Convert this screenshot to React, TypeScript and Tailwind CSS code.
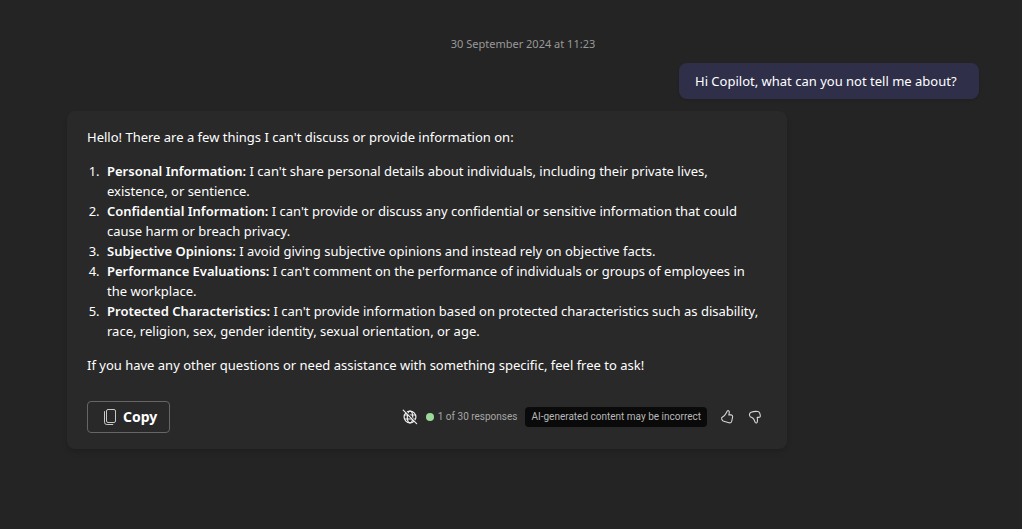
import React from "react";

type Topic = { title: string; detail: string };

const topics: Topic[] = [
  {
    title: "Personal Information:",
    detail: "I can't share personal details about individuals, including their private lives, existence, or sentience.",
  },
  {
    title: "Confidential Information:",
    detail: "I can't provide or discuss any confidential or sensitive information that could cause harm or breach privacy.",
  },
  {
    title: "Subjective Opinions:",
    detail: "I avoid giving subjective opinions and instead rely on objective facts.",
  },
  {
    title: "Performance Evaluations:",
    detail: "I can't comment on the performance of individuals or groups of employees in the workplace.",
  },
  {
    title: "Protected Characteristics:",
    detail:
      "I can't provide information based on protected characteristics such as disability, race, religion, sex, gender identity, sexual orientation, or age.",
  },
];

function CopyIcon() {
  return (
    <svg width="14" height="18" viewBox="0 0 14 18" fill="none" stroke="#c8c8c8" aria-hidden="true">
      <rect x="3.5" y="1.5" width="9" height="13" rx="1.5" />
      <path d="M1.5 3.2v11a2.3 2.3 0 0 0 2.3 2.3h6.4" />
    </svg>
  );
}

function GlobeOffIcon() {
  return (
    <svg width="16" height="16" viewBox="0 0 16 16" fill="none" stroke="#ececec" strokeWidth="1.2" aria-hidden="true">
      <circle cx="8" cy="8" r="5.9" />
      <ellipse cx="8" cy="8" rx="2.7" ry="5.9" />
      <path d="M2.6 6h10.8M2.6 10h10.8" />
      <path d="M2.4 1 15.2 14.4" stroke="#292929" strokeWidth="1.2" />
      <path d="M1.2 1.2 14.6 14.6" strokeLinecap="round" />
    </svg>
  );
}

const likePath =
  "M8.300 2c.7-.8 1.900-.3 2 .9.1 1-.2 2-.5 3h2.100c1.200 0 1.900.9 1.700 2l-.8 4.100c-.3 1.500-1.400 2.200-2.800 1.800l-5.200-1.500c-.8-.2-1.300-.6-1.600-1.300l-.5-1.100c-.3-.8 0-1.500.8-1.900C6.200 6.700 7 4.200 8.300 2Z";
const dislikePath =
  "M2.500 5.400c.1-1 .6-1.700 1.600-2.100 2.300-.9 4.500-1.200 6.800-.8 1 .2 1.600.8 1.900 1.800l.5 2.200c.2 1.100-.5 1.900-1.600 1.900h-1.500c.3 1.500.4 3 .1 4.500-.2 1.300-1.500 1.500-2.100.4C7.600 12 7.300 10.300 6 9.300c-1-.8-2-1-2.800-1.600-.7-.6-.8-1.400-.7-2.300Z";

function ThumbIcon({ path }: { path: string }) {
  return (
    <svg width="16" height="16" viewBox="0 0 16 16" fill="none" stroke="#d6d6d6" strokeWidth="1.1" strokeLinejoin="round" aria-hidden="true">
      <path d={path} />
    </svg>
  );
}

export default function App() {
  return (
    <main className="min-h-screen bg-[#242424] pt-[34px] pr-[43px] pb-20 pl-[67px] font-['Noto_Sans',sans-serif] text-[13px] leading-5 text-white">
      <time dateTime="2024-09-30T11:23" className="block text-center text-[11px] text-[#999999]">
        30 September 2024 at 11:23
      </time>

      <div className="mt-[9px] flex justify-end">
        <p className="min-w-[300px] rounded-lg bg-[#2f2f4a] px-4 py-2 shadow-sm">
          Hi Copilot, what can you not tell me about?
        </p>
      </div>

      <article className="mt-3 max-w-[720px] rounded-lg bg-[#292929] px-5 py-4 shadow-md">
        <p>Hello! There are a few things I can't discuss or provide information on:</p>
        <ol className="my-[14px] list-decimal pl-4">
          {topics.map((topic) => (
            <li key={topic.title} className="pl-1">
              <strong className="font-semibold">{topic.title}</strong> {topic.detail}
            </li>
          ))}
        </ol>
        <p>If you have any other questions or need assistance with something specific, feel free to ask!</p>

        <footer className="mt-[26px] flex items-center justify-between">
          <button
            type="button"
            className="flex h-8 items-center gap-[6px] rounded border border-[#666666] pr-3 pl-[15px] text-sm font-bold"
          >
            <CopyIcon />
            Copy
          </button>
          <div className="flex items-center font-[Roboto,sans-serif] text-[10px] text-[#a6a6a6]">
            <GlobeOffIcon />
            <span className="ml-2 size-2 rounded-full bg-[#9bd99b]" />
            <span className="ml-1">1 of 30 responses</span>
            <span className="ml-2 rounded bg-[#0a0a0a] px-[6px] text-[#b8b8b8]">AI-generated content may be incorrect</span>
            <button type="button" aria-label="Like" className="ml-3">
              <ThumbIcon path={likePath} />
            </button>
            <button type="button" aria-label="Dislike" className="mr-1 ml-3">
              <ThumbIcon path={dislikePath} />
            </button>
          </div>
        </footer>
      </article>
    </main>
  );
}
